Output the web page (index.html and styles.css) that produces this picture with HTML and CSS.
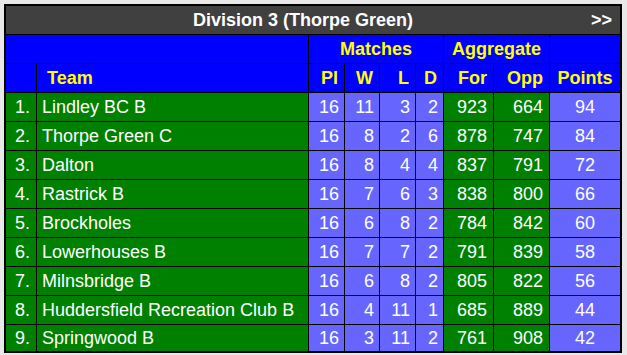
FILE: index.html
```html
<!DOCTYPE html>
<html>
<head>
<meta charset="utf-8">
<title>Division 3 (Thorpe Green)</title>
<link rel="stylesheet" href="styles.css">
</head>
<body>
<div class="standings">
  <div class="title-row"><span class="title">Division 3 (Thorpe Green)</span><span class="next">&gt;&gt;</span></div>

  <div class="hd span-team"></div>
  <div class="hd span-matches center">Matches</div>
  <div class="hd span-agg center">Aggregate</div>
  <div class="hd"></div>

  <div class="hd"></div>
  <div class="hd team-hd">Team</div>
  <div class="hd num">Pl</div>
  <div class="hd num">W</div>
  <div class="hd num">L</div>
  <div class="hd num">D</div>
  <div class="hd num">For</div>
  <div class="hd num">Opp</div>
  <div class="hd center">Points</div>

  <div class="g rank">1.</div><div class="g team">Lindley BC B</div><div class="p num">16</div><div class="p num">11</div><div class="p num">3</div><div class="p num">2</div><div class="g num agg">923</div><div class="g num agg">664</div><div class="p center">94</div>
  <div class="g rank">2.</div><div class="g team">Thorpe Green C</div><div class="p num">16</div><div class="p num">8</div><div class="p num">2</div><div class="p num">6</div><div class="g num agg">878</div><div class="g num agg">747</div><div class="p center">84</div>
  <div class="g rank">3.</div><div class="g team">Dalton</div><div class="p num">16</div><div class="p num">8</div><div class="p num">4</div><div class="p num">4</div><div class="g num agg">837</div><div class="g num agg">791</div><div class="p center">72</div>
  <div class="g rank">4.</div><div class="g team">Rastrick B</div><div class="p num">16</div><div class="p num">7</div><div class="p num">6</div><div class="p num">3</div><div class="g num agg">838</div><div class="g num agg">800</div><div class="p center">66</div>
  <div class="g rank">5.</div><div class="g team">Brockholes</div><div class="p num">16</div><div class="p num">6</div><div class="p num">8</div><div class="p num">2</div><div class="g num agg">784</div><div class="g num agg">842</div><div class="p center">60</div>
  <div class="g rank">6.</div><div class="g team">Lowerhouses B</div><div class="p num">16</div><div class="p num">7</div><div class="p num">7</div><div class="p num">2</div><div class="g num agg">791</div><div class="g num agg">839</div><div class="p center">58</div>
  <div class="g rank">7.</div><div class="g team">Milnsbridge B</div><div class="p num">16</div><div class="p num">6</div><div class="p num">8</div><div class="p num">2</div><div class="g num agg">805</div><div class="g num agg">822</div><div class="p center">56</div>
  <div class="g rank">8.</div><div class="g team">Huddersfield Recreation Club B</div><div class="p num">16</div><div class="p num">4</div><div class="p num">11</div><div class="p num">1</div><div class="g num agg">685</div><div class="g num agg">889</div><div class="p center">44</div>
  <div class="g rank">9.</div><div class="g team">Springwood B</div><div class="p num">16</div><div class="p num">3</div><div class="p num">11</div><div class="p num">2</div><div class="g num agg">761</div><div class="g num agg">908</div><div class="p center">42</div>
</div>
</body>
</html>
```

FILE: styles.css
```css
html, body {
  margin: 0;
  padding: 0;
}
body {
  background: #e8e8e8;
  padding: 4px;
  font-family: "Liberation Sans", Arial, sans-serif;
  font-size: 18px;
}
.standings {
  display: grid;
  width: 618px;
  box-sizing: border-box;
  background: #000;
  padding: 2px;
  gap: 1px;
  grid-template-columns: 30px 271px 35px 34px 35px 27px 49px 55px 70px;
  grid-template-rows: repeat(11, 28px) 26px;
}
.standings > div {
  display: flex;
  align-items: center;
  white-space: nowrap;
  overflow: hidden;
}
.title-row {
  grid-column: 1 / -1;
  background: #404040;
  color: #fff;
  font-weight: bold;
  padding-right: 8px;
}
.title {
  flex: 1;
  text-align: center;
  padding-left: 9px;
}
.next {
  width: 21px;
}
.hd {
  background: #0000ff;
  color: #ffff00;
  font-weight: bold;
}
.span-team { grid-column: 1 / 3; }
.span-matches { grid-column: 3 / 7; }
.span-agg { grid-column: 7 / 9; }
.team-hd {
  padding-left: 10px;
}
.g {
  background: #008000;
  color: #fff;
}
.p {
  background: #6666ff;
  color: #fff;
}
.rank {
  justify-content: flex-end;
  padding-right: 6px;
}
.team {
  padding-left: 5px;
}
.num {
  justify-content: flex-end;
  padding-right: 5px;
}
.hd.num {
  padding-right: 6px;
}
.agg {
  padding-right: 6px;
}
.center {
  justify-content: center;
}
```
